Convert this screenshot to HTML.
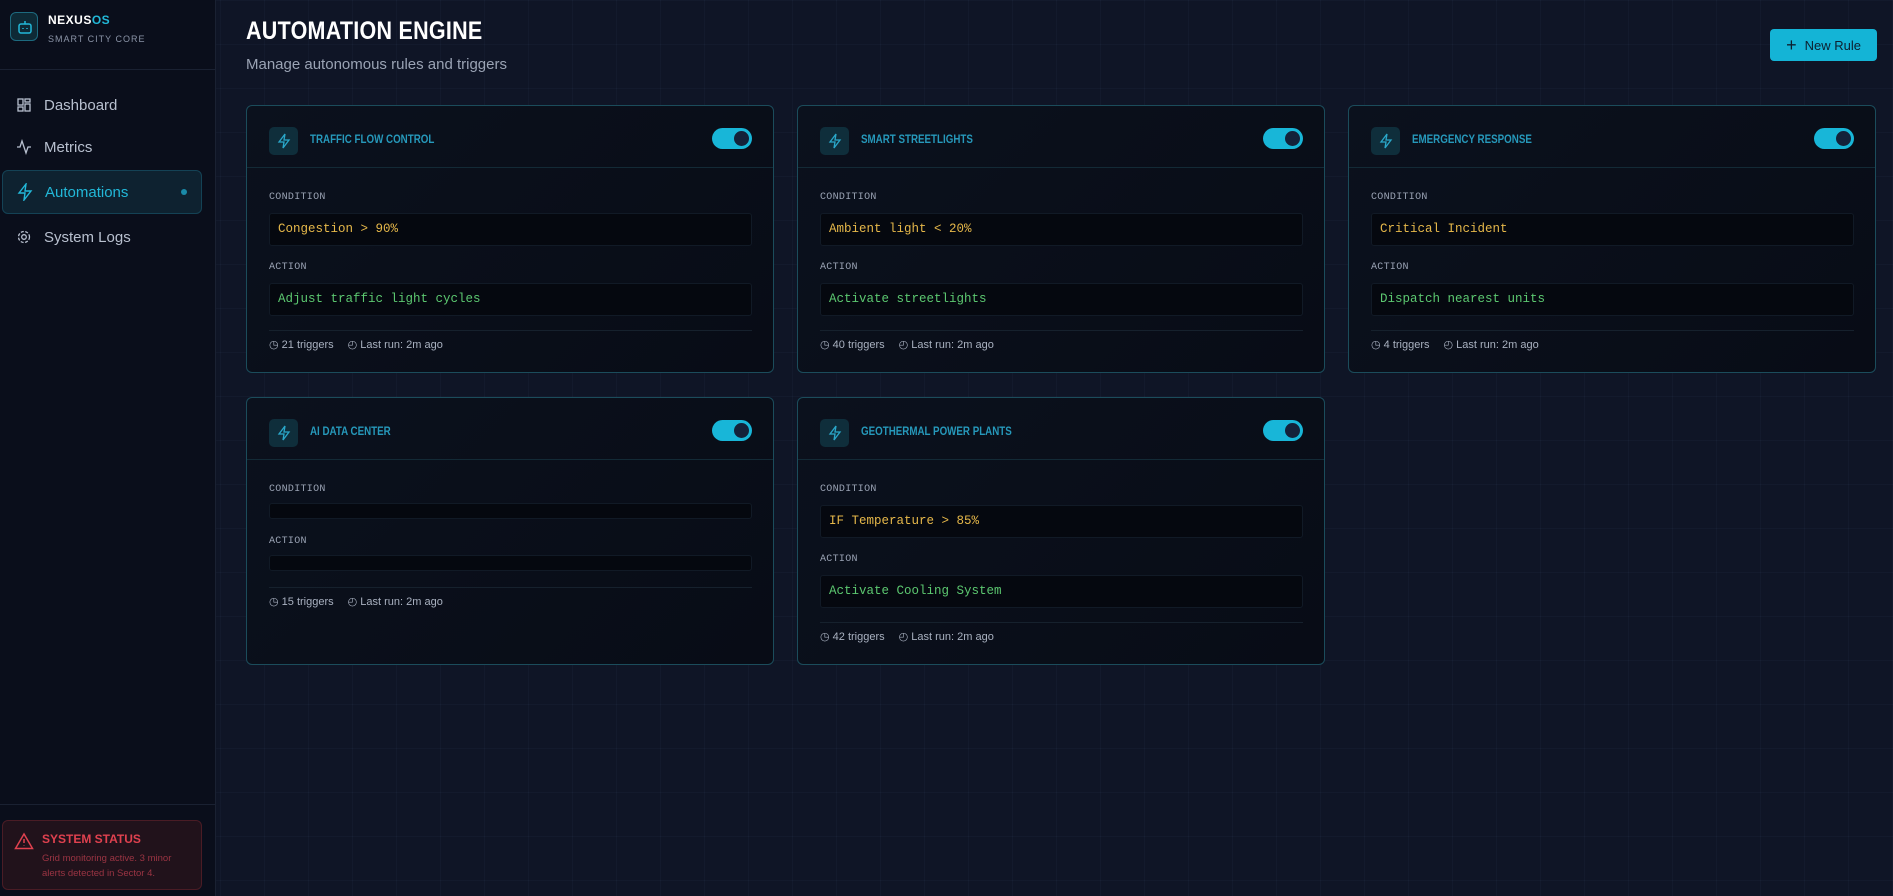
<!DOCTYPE html>
<html><head><meta charset="utf-8"><style>
*{box-sizing:border-box;margin:0;padding:0}
body{width:1893px;height:896px;overflow:hidden;font-family:"Liberation Sans",sans-serif;background:#0f1526;position:relative;
background-image:linear-gradient(rgba(120,150,200,0.045) 1px,transparent 1px),linear-gradient(90deg,rgba(120,150,200,0.045) 1px,transparent 1px);background-size:44px 44px}
.side{position:absolute;left:0;top:0;width:216px;height:896px;background:#0a0e1b;border-right:1px solid #1a2132}
.logo{position:absolute;left:10px;top:12px;width:28px;height:29px;border:1px solid #1d6a7f;border-radius:6px;background:#0e2a36}
.brand{position:absolute;left:48px;top:13px;font-weight:bold;font-size:12px;color:#fff;letter-spacing:.5px}
.brand span{color:#22b8d8}
.sub{position:absolute;left:48px;top:34px;font-size:9px;color:#8b94a7;letter-spacing:1px}
.hline{position:absolute;left:0;width:216px;height:1px;background:#1a2132}
.nav{position:absolute;left:2px;width:200px;height:44px;display:flex;align-items:center;padding-left:14px;font-size:15px;color:#b8c0cf}
.nav svg{margin-right:12px}
.nav.act{background:#0e2230;border:1px solid #144255;border-radius:6px;color:#22b8d8}
.status{position:absolute;left:2px;top:820px;width:200px;height:70px;border:1px solid #4a1c25;background:#21121b;border-radius:6px}
.status b{position:absolute;left:39px;top:11px;font-size:12px;color:#e0414f}
.status p{position:absolute;left:39px;top:30px;font-size:9.5px;line-height:15px;color:#9b3443;width:150px}
h1{position:absolute;left:246px;top:17px;font-size:25px;color:#fff;letter-spacing:.3px;font-weight:bold;transform:scaleX(.86);transform-origin:left}
.subt{position:absolute;left:246px;top:56px;font-size:15px;color:#9aa3b4}
.btn{position:absolute;left:1770px;top:29px;width:107px;height:32px;background:#14b4d6;border-radius:4px;color:#0d2030;font-size:13px;display:flex;align-items:center;justify-content:center;gap:8px}
.card{position:absolute;width:528px;height:268px;border:1px solid #1b4c5b;border-radius:6px;background:linear-gradient(135deg,#0b111d,#080c16)}
.ch{position:absolute;left:0;top:0;right:0;height:62px;border-bottom:1px solid #132a36}
.ic{position:absolute;left:22px;top:21px;width:29px;height:28px;background:#0f2e3b;border-radius:5px;display:flex;align-items:center;justify-content:center}
.tt{position:absolute;left:63px;top:28px;font-size:11.5px;font-weight:bold;color:#2699bb;transform:scaleX(.85);transform-origin:left}
.tg{position:absolute;right:21px;top:22px;width:40px;height:21px;border-radius:11px;background:#18b6d8}
.tg:after{content:"";position:absolute;right:3px;top:3px;width:15px;height:15px;border-radius:50%;background:#14223a}
.lb{position:absolute;left:22px;font-family:"Liberation Mono",monospace;font-size:10px;color:#9aa3b4;letter-spacing:.3px}
.bx{position:absolute;left:22px;right:21px;height:33px;background:#05080f;border:1px solid #111a26;border-radius:3px;font-family:"Liberation Mono",monospace;font-size:12.5px;padding:8px 0 0 8px}
.y{color:#e6b84a}.g{color:#5cc870}
.dv{position:absolute;left:22px;right:21px;height:1px;background:#16212d}
.ft{position:absolute;left:22px;font-size:11px;color:#a9b1c0;display:flex;gap:14px;align-items:center}
.ft span{display:flex;align-items:center;gap:4px}
</style></head><body>
<div class="side">
<div class="logo"><svg width="28" height="28" viewBox="0 0 28 28" fill="none" stroke="#22b8d8" stroke-width="1.5"><rect x="8" y="11" width="12" height="9" rx="2"/><path d="M14 11V8M12 15v1M16 15v1"/></svg></div>
<div class="brand">NEXUS<span>OS</span></div>
<div class="sub">SMART CITY CORE</div>
<div class="hline" style="top:69px"></div>
<div class="nav" style="top:83px"><svg width="16" height="16" viewBox="0 0 16 16" fill="none" stroke="#b8c0cf" stroke-width="1.3"><rect x="2" y="2" width="5" height="6"/><rect x="9" y="2" width="5" height="3"/><rect x="9" y="7" width="5" height="7"/><rect x="2" y="10" width="5" height="4"/></svg>Dashboard</div>
<div class="nav" style="top:125px"><svg width="16" height="16" viewBox="0 0 16 16" fill="none" stroke="#b8c0cf" stroke-width="1.3"><path d="M1 8h3l2-6 4 12 2-6h3"/></svg>Metrics</div>
<div class="nav act" style="top:170px"><svg width="16" height="18" viewBox="0 0 16 18" fill="none" stroke="#22b8d8" stroke-width="1.4"><path d="M9 1L2 10h6l-1 7 7-9H8z"/></svg>Automations<span style="position:absolute;right:14px;width:6px;height:6px;border-radius:50%;background:#1a8aa8"></span></div>
<div class="nav" style="top:215px"><svg width="16" height="16" viewBox="0 0 16 16" fill="none" stroke="#b8c0cf" stroke-width="1.3"><circle cx="8" cy="8" r="2.3"/><circle cx="8" cy="8" r="5.5" stroke-dasharray="3 1.5"/></svg>System Logs</div>
<div class="hline" style="top:804px"></div>
<div class="status"><svg style="position:absolute;left:11px;top:11px" width="20" height="18" viewBox="0 0 20 18" fill="none" stroke="#e0414f" stroke-width="1.5"><path d="M10 2L1.5 16.5h17z"/><path d="M10 7v4M10 13.5v.5"/></svg><b>SYSTEM STATUS</b><p>Grid monitoring active. 3 minor alerts detected in Sector 4.</p></div>
</div>
<h1>AUTOMATION ENGINE</h1>
<div class="subt">Manage autonomous rules and triggers</div>
<div class="btn"><span style="font-size:18px;font-weight:300">+</span>New Rule</div>

<div class="card" style="left:246px;top:105px">
<div class="ch"><div class="ic"><svg width="14" height="16" viewBox="0 0 14 16" fill="none" stroke="#2aa7c9" stroke-width="1.3"><path d="M8 1L2 9h5l-1 6 6-8H7z"/></svg></div><div class="tt">TRAFFIC FLOW CONTROL</div><div class="tg"></div></div>
<div class="lb" style="top:86px">CONDITION</div><div class="bx y" style="top:107px">Congestion &gt; 90%</div>
<div class="lb" style="top:156px">ACTION</div><div class="bx g" style="top:177px">Adjust traffic light cycles</div>
<div class="dv" style="top:224px"></div>
<div class="ft" style="top:232px"><span>◷ 21 triggers</span><span>◴ Last run: 2m ago</span></div>
</div>
<div class="card" style="left:797px;top:105px">
<div class="ch"><div class="ic"><svg width="14" height="16" viewBox="0 0 14 16" fill="none" stroke="#2aa7c9" stroke-width="1.3"><path d="M8 1L2 9h5l-1 6 6-8H7z"/></svg></div><div class="tt">SMART STREETLIGHTS</div><div class="tg"></div></div>
<div class="lb" style="top:86px">CONDITION</div><div class="bx y" style="top:107px">Ambient light &lt; 20%</div>
<div class="lb" style="top:156px">ACTION</div><div class="bx g" style="top:177px">Activate streetlights</div>
<div class="dv" style="top:224px"></div>
<div class="ft" style="top:232px"><span>◷ 40 triggers</span><span>◴ Last run: 2m ago</span></div>
</div>
<div class="card" style="left:1348px;top:105px">
<div class="ch"><div class="ic"><svg width="14" height="16" viewBox="0 0 14 16" fill="none" stroke="#2aa7c9" stroke-width="1.3"><path d="M8 1L2 9h5l-1 6 6-8H7z"/></svg></div><div class="tt">EMERGENCY RESPONSE</div><div class="tg"></div></div>
<div class="lb" style="top:86px">CONDITION</div><div class="bx y" style="top:107px">Critical Incident</div>
<div class="lb" style="top:156px">ACTION</div><div class="bx g" style="top:177px">Dispatch nearest units</div>
<div class="dv" style="top:224px"></div>
<div class="ft" style="top:232px"><span>◷ 4 triggers</span><span>◴ Last run: 2m ago</span></div>
</div>
<div class="card" style="left:246px;top:397px">
<div class="ch"><div class="ic"><svg width="14" height="16" viewBox="0 0 14 16" fill="none" stroke="#2aa7c9" stroke-width="1.3"><path d="M8 1L2 9h5l-1 6 6-8H7z"/></svg></div><div class="tt">AI DATA CENTER</div><div class="tg"></div></div>
<div class="lb" style="top:86px">CONDITION</div><div class="bx" style="top:105px;height:16px"></div>
<div class="lb" style="top:138px">ACTION</div><div class="bx" style="top:157px;height:16px"></div>
<div class="dv" style="top:189px"></div>
<div class="ft" style="top:197px"><span>◷ 15 triggers</span><span>◴ Last run: 2m ago</span></div>
</div>
<div class="card" style="left:797px;top:397px">
<div class="ch"><div class="ic"><svg width="14" height="16" viewBox="0 0 14 16" fill="none" stroke="#2aa7c9" stroke-width="1.3"><path d="M8 1L2 9h5l-1 6 6-8H7z"/></svg></div><div class="tt">GEOTHERMAL POWER PLANTS</div><div class="tg"></div></div>
<div class="lb" style="top:86px">CONDITION</div><div class="bx y" style="top:107px">IF Temperature &gt; 85%</div>
<div class="lb" style="top:156px">ACTION</div><div class="bx g" style="top:177px">Activate Cooling System</div>
<div class="dv" style="top:224px"></div>
<div class="ft" style="top:232px"><span>◷ 42 triggers</span><span>◴ Last run: 2m ago</span></div>
</div>
</body></html>
